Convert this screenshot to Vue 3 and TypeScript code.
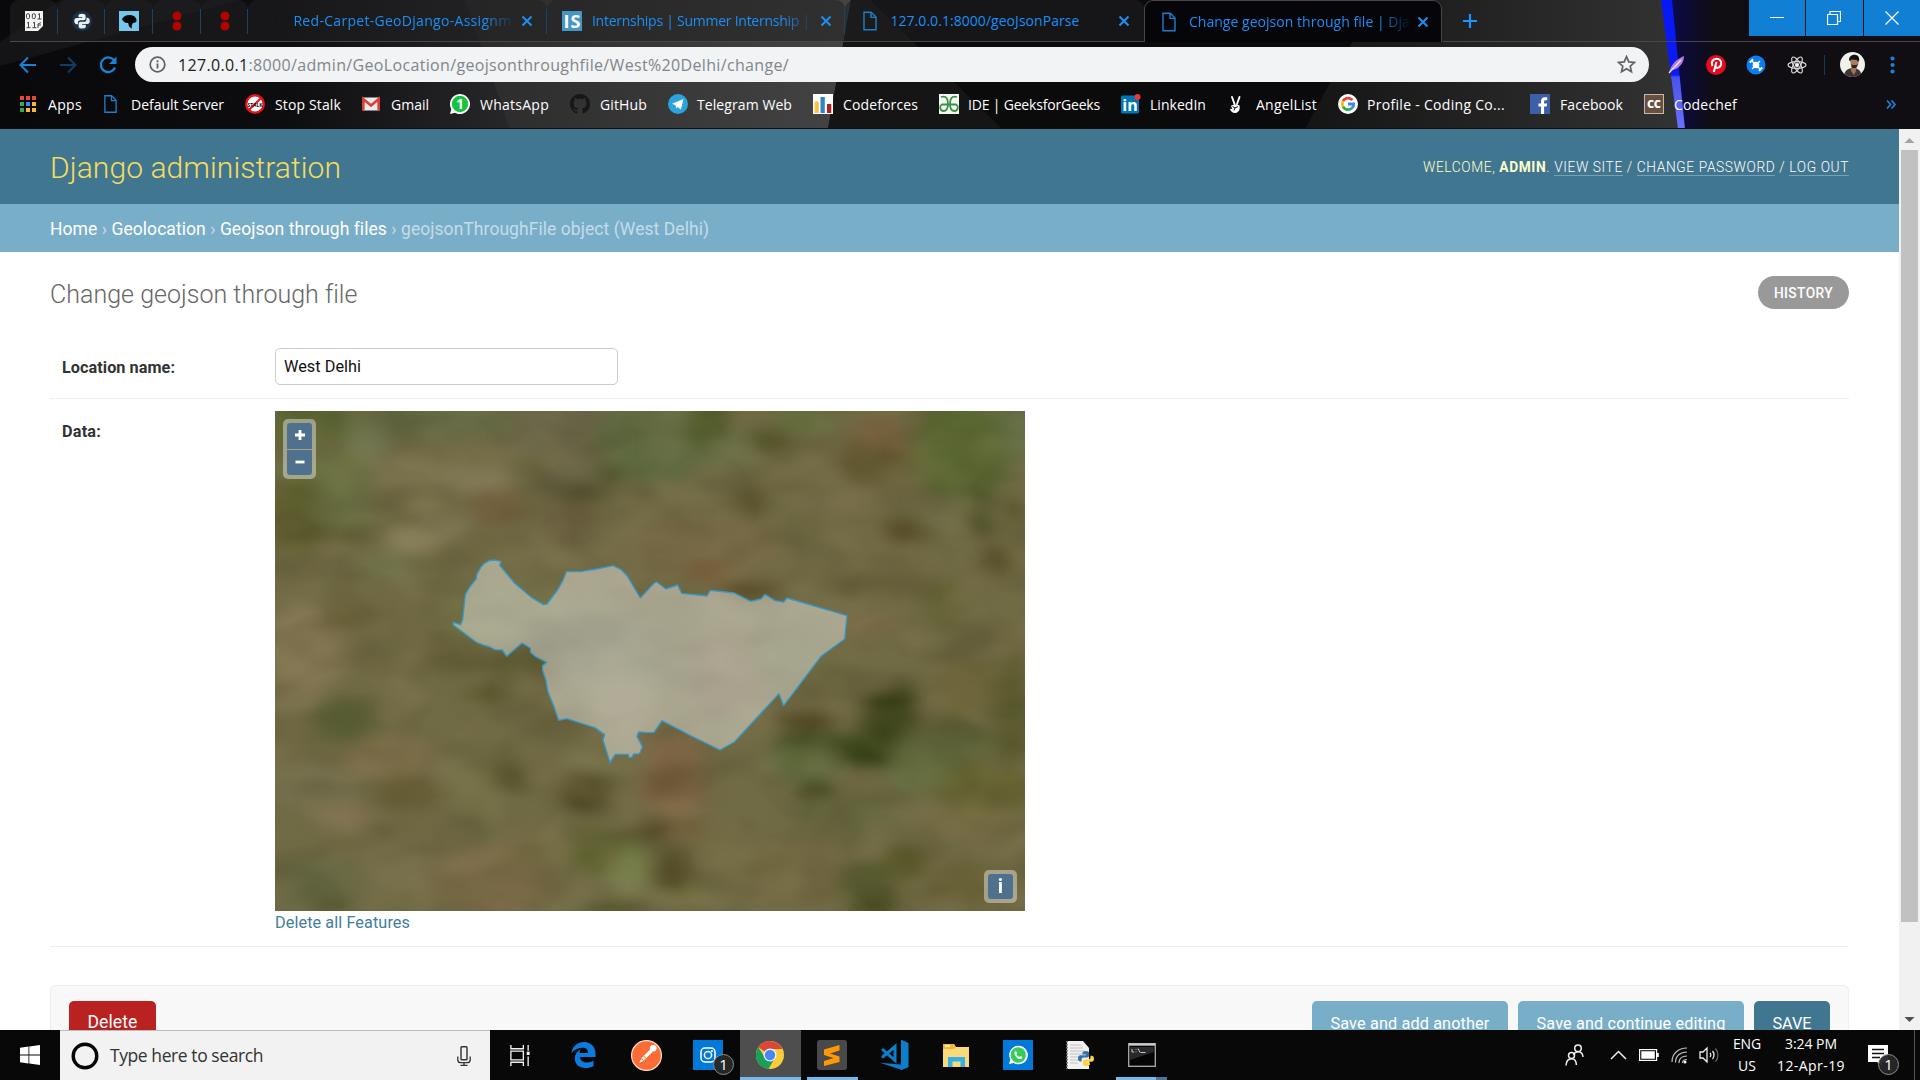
<script setup lang="ts">
interface Tab { icon: string; title: string; width: number; active?: boolean; fade?: boolean }
interface Bookmark { icon: string; label: string; width: number; iconWidth: number; gap: number; after?: number }
interface TaskItem { icon: string; state?: 'active' | 'open' | 'multi'; badge?: string }

/* Tracks a label out (or in) so that it fills the given width. */
const vFit = {
  mounted(el: HTMLElement, binding: { value: number }) {
    const natural = el.getBoundingClientRect().width
    const count = (el.textContent ?? '').trim().length
    el.style.letterSpacing = `${(binding.value - natural) / count}px`
  },
}

const pinned: string[] = ['binary', 'python', 'bird', 'dots', 'dots']

const tabs: Tab[] = [
  { icon: 'ghdark', title: 'Red-Carpet-GeoDjango-Assignm', width: 218, fade: true },
  { icon: 'is', title: 'Internships | Summer Internship |', width: 218, fade: true },
  { icon: 'page', title: '127.0.0.1:8000/geoJsonParse', width: 189 },
  { icon: 'page', title: 'Change geojson through file | Dja', width: 221, active: true, fade: true },
]

const bookmarks: Bookmark[] = [
  { icon: 'apps', label: 'Apps', width: 34, iconWidth: 18, gap: 11 },
  { icon: 'page', label: 'Default Server', width: 93, iconWidth: 15, gap: 13 },
  { icon: 'stop', label: 'Stop Stalk', width: 66, iconWidth: 20, gap: 10 },
  { icon: 'gmail', label: 'Gmail', width: 38, iconWidth: 18, gap: 11 },
  { icon: 'wa', label: 'WhatsApp', width: 69, iconWidth: 20, gap: 10 },
  { icon: 'github', label: 'GitHub', width: 47, iconWidth: 20, gap: 10 },
  { icon: 'telegram', label: 'Telegram Web', width: 95, iconWidth: 20, gap: 9 },
  { icon: 'cf', label: 'Codeforces', width: 75, iconWidth: 20, gap: 10 },
  { icon: 'gfg', label: 'IDE | GeeksforGeeks', width: 132, iconWidth: 20, gap: 9 },
  { icon: 'linkedin', label: 'LinkedIn', width: 56, iconWidth: 20, gap: 9 },
  { icon: 'angel', label: 'AngelList', width: 61, iconWidth: 16, gap: 13 },
  { icon: 'google', label: 'Profile - Coding Co...', width: 138, iconWidth: 20, gap: 9, after: 4 },
  { icon: 'fb', label: 'Facebook', width: 63, iconWidth: 20, gap: 10 },
  { icon: 'cc', label: 'Codechef', width: 63, iconWidth: 20, gap: 10 },
]

const tasks: TaskItem[] = [
  { icon: 'taskview' },
  { icon: 'edge' },
  { icon: 'postman' },
  { icon: 'insta', badge: '1' },
  { icon: 'chrome', state: 'active' },
  { icon: 'sublime', state: 'open' },
  { icon: 'vscode' },
  { icon: 'folder' },
  { icon: 'watile' },
  { icon: 'pyfile' },
  { icon: 'cmd', state: 'multi' },
]

/* Ground cover patches: x, y, rx, ry, colour, opacity */
const patches: [number, number, number, number, string, number][] = [
  [60, 60, 130, 60, '#59662f', 0.8], [330, 60, 150, 50, '#626b45', 0.8], [200, 125, 40, 50, '#76805a', 0.7],
  [110, 230, 90, 70, '#66703f', 0.8], [50, 340, 60, 90, '#5b5b2a', 0.8], [150, 330, 60, 60, '#6b7145', 0.7],
  [120, 392, 100, 14, '#4f4c22', 0.8], [290, 210, 70, 40, '#857d59', 0.6], [430, 225, 60, 40, '#8a8160', 0.7],
  [310, 300, 40, 40, '#847a55', 0.6], [470, 310, 50, 50, '#74613f', 0.9], [290, 410, 45, 35, '#8c8460', 0.8],
  [380, 375, 40, 35, '#847a58', 0.6], [250, 480, 60, 50, '#70744a', 0.7], [545, 95, 50, 60, '#6e6a4e', 0.8],
  [650, 140, 60, 120, '#626044', 0.7], [695, 205, 30, 35, '#4a4a26', 0.8], [640, 272, 40, 14, '#4b4d28', 0.9],
  [590, 240, 30, 40, '#54523a', 0.7], [790, 120, 100, 110, '#5d6a40', 0.85], [905, 70, 30, 80, '#41501c', 0.9],
  [960, 150, 60, 60, '#6c7248', 0.7], [1030, 115, 40, 30, '#545228', 0.9], [1100, 60, 60, 40, '#5f6e3a', 0.7],
  [1260, 120, 60, 60, '#775f3b', 0.8], [1250, 190, 70, 50, '#63572f', 0.8], [1430, 150, 90, 130, '#56662f', 0.85],
  [1540, 90, 40, 80, '#64744a', 0.7], [990, 300, 30, 40, '#524c26', 0.8], [1310, 380, 40, 30, '#51451f', 0.8],
  [1200, 300, 80, 60, '#756b47', 0.6], [1470, 330, 18, 60, '#3d431a', 0.8], [1540, 320, 14, 40, '#48471f', 0.8],
  [1390, 330, 50, 60, '#6f7049', 0.6], [1500, 470, 25, 40, '#4e4320', 0.8], [620, 350, 60, 60, '#655a3c', 0.7],
  [900, 430, 130, 80, '#7d6c48', 0.7], [900, 500, 40, 30, '#735432', 0.7], [990, 550, 60, 20, '#514320', 0.9],
  [760, 460, 80, 50, '#786c4a', 0.6], [560, 420, 30, 40, '#817553', 0.6], [1200, 500, 130, 12, '#837953', 0.6],
  [1300, 540, 150, 12, '#5f5530', 0.6], [1390, 600, 40, 60, '#61602f', 0.6], [1230, 650, 60, 30, '#826f4b', 0.7],
  [70, 720, 80, 110, '#8a7c58', 0.8], [170, 620, 60, 50, '#685f38', 0.7], [380, 730, 60, 60, '#5d5730', 0.7],
  [450, 850, 35, 30, '#545024', 0.8], [60, 880, 60, 60, '#827751', 0.6], [150, 930, 60, 60, '#565d31', 0.85],
  [520, 770, 60, 40, '#56552d', 0.8], [480, 620, 110, 80, '#77784c', 0.8], [660, 690, 120, 60, '#5c5e40', 0.7],
  [700, 780, 100, 60, '#6e6e4c', 0.6], [730, 900, 60, 90, '#847c58', 0.7], [1050, 760, 100, 70, '#6a6942', 0.7],
  [940, 800, 60, 100, '#756245', 0.7], [850, 770, 40, 20, '#7d7a59', 0.7],
  [1110, 930, 60, 18, '#4c401c', 0.8], [1270, 930, 50, 70, '#313a11', 0.95], [1230, 1020, 70, 40, '#303d12', 0.9],
  [1310, 870, 18, 60, '#323c14', 0.8], [1130, 1000, 80, 40, '#465024', 0.9], [1130, 1135, 36, 36, '#3d4119', 0.9],
  [1100, 1060, 70, 50, '#5d6a3c', 0.8], [1390, 1010, 90, 80, '#596035', 0.8], [1530, 900, 40, 140, '#525427', 0.8],
  [1440, 840, 70, 60, '#6c6236', 0.7], [1470, 1130, 90, 60, '#61602c', 0.8], [1450, 1230, 80, 40, '#786b42', 0.7],
  [1340, 1090, 60, 60, '#63723f', 0.6], [1190, 1200, 100, 50, '#666b41', 0.6], [240, 1040, 80, 60, '#7d6d48', 0.8],
  [90, 1130, 90, 60, '#757150', 0.7], [160, 1210, 50, 40, '#89775a', 0.8], [290, 1140, 60, 40, '#645a32', 0.8],
  [420, 1120, 50, 90, '#76744a', 0.6], [495, 1080, 30, 50, '#56522a', 0.7], [650, 1130, 50, 50, '#534c25', 0.8],
  [650, 1180, 50, 14, '#423c1a', 0.7], [830, 1030, 60, 60, '#86694a', 0.8], [830, 1130, 60, 60, '#7a5d3f', 0.8],
  [840, 1180, 40, 12, '#987858', 0.7], [840, 1240, 50, 40, '#79643f', 0.8], [680, 1050, 80, 30, '#7f7b53', 0.7],
  [790, 1240, 16, 40, '#4b411f', 0.9], [730, 1265, 40, 12, '#4d4d24', 0.7], [740, 1360, 40, 70, '#77814c', 0.9],
  [660, 1310, 50, 60, '#5e622f', 0.8], [830, 1370, 32, 60, '#4c4520', 0.85], [700, 1475, 60, 14, '#454d1d', 0.9],
  [860, 1440, 50, 16, '#7a7a49', 0.8], [950, 1330, 70, 60, '#716b41', 0.6], [1090, 1380, 90, 90, '#766b44', 0.7],
  [1240, 1400, 60, 60, '#50562a', 0.8], [1240, 1475, 50, 20, '#424315', 0.9], [1305, 1350, 35, 45, '#53521f', 0.8],
  [1440, 1400, 70, 60, '#665e33', 0.8], [100, 1400, 110, 70, '#626440', 0.8], [300, 1340, 110, 80, '#7b714e', 0.8],
  [460, 1400, 100, 90, '#7e6b48', 0.8], [130, 1475, 30, 10, '#474723', 0.8], [560, 1300, 60, 60, '#776d45', 0.6],
]

const outline =
  '70,247 92,254 98,238 106,164 118,143 139,116 140,104 152,83 162,71 178,62 194,60 213,64 209,76 254,130 304,172 340,194 351,192 382,151 399,121 409,95 450,95 500,87 549,77 572,88 591,107 631,174 669,133 679,125 708,147 743,135 755,160 831,168 841,151 913,159 962,184 993,177 1005,163 1035,182 1061,186 1071,174 1251,227 1244,297 1173,349 1061,497 1047,461 913,606 870,630 786,589 696,542 672,577 650,578 626,576 621,589 637,620 630,638 625,642 611,642 606,652 597,652 595,643 556,643 540,667 519,600 524,584 495,563 410,536 386,541 372,500 354,455 347,418 338,391 338,377 350,367 315,349 302,337 301,324 276,309 230,349 217,330 195,329 180,321 160,315 138,306 70,255'

const saves: { label: string; width: number; primary?: boolean }[] = [
  { label: 'Save and add another', width: 159 },
  { label: 'Save and continue editing', width: 189 },
  { label: 'SAVE', width: 39, primary: true },
]
</script>

<template>
  <div class="screen">
    <svg class="defs" width="0" height="0">
      <defs>
        <symbol id="page" viewBox="0 0 16 20"><path d="M2 1.2h7.2L14 6v12.8H2zM9 1.2V6.400h5" fill="none" stroke="#1d7fc9" stroke-width="1.4" /></symbol>
        <symbol id="binary" viewBox="0 0 20 20"><path d="M1 0h18v15l-5 5H1z" fill="#f4f4f4" /><g fill="none" stroke="#444" stroke-width="1"><rect x="2.500" y="2.700" width="3" height="5" rx="1.300" /><rect x="8.300" y="2.700" width="3" height="5" rx="1.300" /><path d="M14 3.500l1.500-.8v5.300M13.500 8h4M3 12l1.500-.8v5.500M2.500 16.700h4M9 12l1.500-.8v5.500M8.300 16.700h4M14 17v-4l3-1.500M14 14h3" /></g></symbol>
        <symbol id="python" viewBox="0 0 20 20"><circle cx="10" cy="10" r="10" fill="#1d3247" /><path d="M9.900 2.700c-3 0-3.400 1-3.400 2v1.600h3.700v.8H4.800c-1.500 0-2.500 1.200-2.500 3s1 3.200 2.400 3.200h1.200v-1.700c0-1.400 1-2.300 2.400-2.300h3.300c1.200 0 2-.9 2-2V4.800c0-1.400-1.400-2.100-3.700-2.100z" fill="#f3f6f8" /><path d="M10.300 17.500c3 0 3.500-1 3.500-2v-1.700h-3.700V13h5.300c1.500 0 2.400-1.200 2.400-3s-1-3.200-2.400-3.200h-1v1.700c0 1.400-1 2.300-2.500 2.300H8.600c-1.200 0-2 .9-2 2v2.600c0 1.400 1.400 2.100 3.700 2.100z" fill="#e6ecf0" /></symbol>
        <symbol id="bird" viewBox="0 0 20 20"><rect width="20" height="20" fill="#76c5ea" /><path d="M3 8c2-3 5-4.500 8.500-4 4 .5 6 3 6 5.500 0 2.200-2 2.500-3.500 2.300-1 2-1.800 3.500-1 5.700-3-.8-3.500-3.500-3.800-5.500C7 12.500 4 11 3 8z" fill="#050505" /></symbol>
        <symbol id="dots" viewBox="0 0 20 20"><circle cx="10" cy="5" r="4.500" fill="#b00404" /><circle cx="10" cy="15" r="4.500" fill="#b00404" /></symbol>
        <symbol id="ghdark" viewBox="0 0 20 20"><circle cx="10" cy="10" r="7" fill="none" stroke="#191919" stroke-width="2" /></symbol>
        <symbol id="is" viewBox="0 0 20 20"><rect width="20" height="20" fill="#4796c8" /><text x="10" y="17" text-anchor="middle" font-family="Open Sans, sans-serif" font-weight="700" font-size="18" textLength="17" fill="#fff">IS</text></symbol>
        <symbol id="apps" viewBox="0 0 18 18"><path d="M1 1h4v4H1zM7 1h4v4H7zM13 1h4v4h-4z" fill="#e8453c" /><path d="M1 7h4v4H1zM1 13h4v4H1z" fill="#36a852" /><path d="M7 7h4v4H7z" fill="#4285f4" /><path d="M13 7h4v4h-4zM7 13h4v4H7zM13 13h4v4h-4z" fill="#f9bb2d" /></symbol>
        <symbol id="stop" viewBox="0 0 20 20"><circle cx="10" cy="10" r="10" fill="#e5131a" /><circle cx="10" cy="10" r="7.600" fill="#fff" /><path d="M15.800 4.200L4.200 15.800" stroke="#e5131a" stroke-width="2" /><text x="10" y="12.500" text-anchor="middle" font-size="6" font-weight="700" font-family="Open Sans, sans-serif" textLength="15" lengthAdjust="spacingAndGlyphs" fill="#111">STALK</text></symbol>
        <symbol id="gmail" viewBox="0 0 18 18"><rect y="2.500" width="18" height="13" rx="1" fill="#ececec" /><path d="M1.300 15.500V4l7.700 6.500L16.700 4v11.500" fill="none" stroke="#d93f35" stroke-width="2.600" /></symbol>
        <symbol id="wa" viewBox="0 0 20 20"><path d="M0 20l1.300-5A10 10 0 1 1 5 18.700z" fill="#fff" /><circle cx="10" cy="10" r="8.200" fill="#16c240" /><text x="10" y="15" text-anchor="middle" font-size="14" font-weight="700" font-family="Open Sans, sans-serif" fill="#fff">1</text></symbol>
        <symbol id="github" viewBox="0 0 16 16"><path fill="#181616" d="M8 0C3.580 0 0 3.580 0 8c0 3.540 2.290 6.530 5.470 7.590.4.070.55-.17.55-.38v-1.490c-2.010.37-2.530-.49-2.690-.94-.09-.23-.48-.94-.82-1.130-.28-.15-.68-.52-.01-.53.63-.01 1.080.58 1.230.82.72 1.210 1.870.87 2.330.66.07-.52.28-.87.510-1.070-1.780-.2-3.640-.89-3.640-3.950 0-.87.310-1.590.82-2.150-.08-.2-.36-1.020.08-2.120 0 0 .67-.21 2.200.82a7.600 7.600 0 0 1 4 0c1.530-1.040 2.200-.82 2.200-.82.44 1.100.16 1.920.08 2.120.510.56.82 1.270.82 2.150 0 3.070-1.870 3.750-3.650 3.950.29.25.54.73.54 1.480v2.200c0 .21.150.46.55.38A8 8 0 0 0 8 0z" /></symbol>
        <symbol id="telegram" viewBox="0 0 20 20"><circle cx="10" cy="10" r="10" fill="#2ba3de" /><path d="M4 9.800L15.500 5l-2.600 10.500-3.300-2.600-1.500 1.600-.5-3.200z" fill="#fff" /></symbol>
        <symbol id="cf" viewBox="0 0 20 20"><rect width="20" height="20" fill="#fff" /><path d="M1.500 7.500h4.300V19H1.500z" fill="#f3c643" /><path d="M7.500 3h4.300v16H7.500z" fill="#2c86c9" /><path d="M14 10h4.300v9H14z" fill="#b01f24" /></symbol>
        <symbol id="gfg" viewBox="0 0 20 20"><rect width="20" height="20" fill="#f4f8f3" /><g fill="none" stroke="#3c8f47" stroke-width="1.800"><path d="M2 3c6-2 7 3 7 7s-1 7-4.500 7S0 12 3 10.500h14C20 12 19 17 15.500 17S11 14 11 10s1-9 7-7" /></g></symbol>
        <symbol id="linkedin" viewBox="0 0 20 20"><rect y="1.500" width="18" height="18" rx="1.500" fill="#0077b5" /><text x="9" y="16.500" text-anchor="middle" font-size="16" font-weight="700" font-family="Open Sans, sans-serif" fill="#fff">in</text><circle cx="16.500" cy="3" r="3" fill="#f2362f" /></symbol>
        <symbol id="angel" viewBox="0 0 16 20"><path d="M5 3l2.500 7M12.500 3L10 10" stroke="#fff" stroke-width="1.900" stroke-linecap="round" /><path d="M4 12c2-2 6-2 8.500-.5.8 3.500-.5 7-4 7.500-3 .2-5-2-5.500-4 2-.5 2.500.5 3 1.500" fill="#fff" /><path d="M5.500 12.500l2.500 1.500 3-1.500M8 14l-1 2.500" stroke="#111" fill="none" /></symbol>
        <symbol id="google" viewBox="0 0 20 20"><circle cx="10" cy="10" r="10" fill="#fff" /><g fill="none" stroke-width="2.800"><path d="M14.500 6.200A5.800 5.800 0 0 0 5 7.200" stroke="#ea4335" /><path d="M5 7.200a6 6 0 0 0 0 5.600" stroke="#fbbc05" /><path d="M5 12.800a5.800 5.800 0 0 0 8.800 1.500" stroke="#34a853" /><path d="M13.800 14.300A5.600 5.600 0 0 0 15.700 10H10" stroke="#4285f4" /></g></symbol>
        <symbol id="fb" viewBox="0 0 20 20"><rect width="20" height="20" fill="#3d5fa8" /><path d="M11 20v-7.500H8.500v-3H11V7.300c0-2.600 1.500-4 3.900-4h2.300v2.900h-1.600c-1.200 0-1.500.6-1.500 1.500v1.800h3l-.4 3h-2.600V20z" fill="#fff" /></symbol>
        <symbol id="cc" viewBox="0 0 20 20"><rect x=".5" y=".5" width="19" height="19" fill="#66503f" stroke="#c9b8a8" /><text x="10" y="14.200" text-anchor="middle" font-size="11" font-weight="800" font-family="Open Sans, sans-serif" textLength="14" fill="#fff">CC</text></symbol>

        <symbol id="taskview" viewBox="0 0 22 24"><g fill="none" stroke="#f2f2f2" stroke-width="1.400"><path d="M1.500 1v4h13V1M1.500 23v-4h13v4M1.500 7.500h13v9h-13zM19.500 1v6M19.500 13v10" /></g><path d="M18 8h3v3.500h-3z" fill="#fff" /></symbol>
        <symbol id="edge" viewBox="0 0 24 26"><path d="M0 11C1 4 6 0 12.500 0 19.500 0 24 5 24 11.500V15H8.500c.3 4 3.500 5.500 7 5.500 2.500 0 4.700-.6 6.500-1.700v5.100C20 25.300 17 26 14 26 7.500 26 3.300 22.300 3.300 16.500c0-4 2.200-7.200 6-9.200C8.500 8.300 8.200 9.500 8 11h8.500c0-3.500-1.800-5.300-5.300-5.300C7 5.700 3 7.500 0 11z" fill="#0b7bdd" /></symbol>
        <symbol id="postman" viewBox="0 0 32 32"><circle cx="16" cy="16" r="15.400" fill="#fb6c37" stroke="#fbd9c9" stroke-width="1.300" /><path d="M11 18.500L20 9.500l2.500 2.500-9 9-5.500 3.500z" fill="#fff" /><circle cx="23" cy="8.500" r="3.400" fill="#fff" /><path d="M10 19l3 2M13 16.500l2.500 2.500M8 24h4" stroke="#ef5a2c" /></symbol>
        <symbol id="insta" viewBox="0 0 30 30"><rect width="30" height="30" fill="#0079d9" /><rect x="8" y="8" width="14" height="14" rx="4" fill="none" stroke="#fff" stroke-width="1.500" /><circle cx="15" cy="15" r="3.600" fill="none" stroke="#fff" stroke-width="1.500" /><circle cx="19" cy="11" r="1" fill="#fff" /></symbol>
        <symbol id="chrome" viewBox="0 0 28 28"><circle cx="14" cy="14" r="14" fill="#fbcb3d" /><path d="M14 14L2.300 6.300A14 14 0 0 1 26.500 8H14z" fill="#dc4638" /><path d="M2.300 6.300A14 14 0 0 0 12.500 28l5.500-9.500L8 15z" fill="#199f59" /><circle cx="14" cy="14" r="6.500" fill="#f2f2f2" /><circle cx="14" cy="14" r="5.200" fill="#4687f4" /></symbol>
        <symbol id="sublime" viewBox="0 0 30 30"><rect width="30" height="30" rx="2.500" fill="#494949" /><path d="M7 9.500L22.500 5v5.500L13 13.500l9.500 3V22L7 26v-5l9.500-3L7 15z" fill="#ff9806" /></symbol>
        <symbol id="vscode" viewBox="0 0 30 30"><path d="M23 0l6.500 3v24L23 30 1 22.800l21 1.600V0z" fill="#0a7fcb" /><path d="M3 9l13 11.500V6.500L3 17.500" fill="none" stroke="#0a7fcb" stroke-width="3" /></symbol>
        <symbol id="folder" viewBox="0 0 28 26"><path d="M1 2h11l2 3h13v20H1z" fill="#fad978" /><path d="M1 2h11l2 3-2 2H1z" fill="#f3b92c" /><path d="M3 3.200h5v1.500H3z" fill="#fff" /><path d="M6 25V15h17v10h-4.500v-5.500h-8V25z" fill="#36b0e6" /></symbol>
        <symbol id="watile" viewBox="0 0 30 30"><rect width="30" height="30" fill="#0079d9" /><path d="M6 24l1.300-4.600A9.300 9.300 0 1 1 10.700 23z" fill="#fff" /><circle cx="15.200" cy="15" r="7.700" fill="#37cc5a" /><path d="M11.500 12c.5-1 1.600-1 2 0l.6 1.300-.7 1c.7 1.400 1.500 2.100 2.900 2.700l1-.9 1.700.9c.6.400 0 1.700-.9 2-2.900.8-7.200-3.300-6.600-7z" fill="#fff" /></symbol>
        <symbol id="pyfile" viewBox="0 0 28 28"><path d="M1 0h16l6 7v21H1z" fill="#f1f1f1" /><path d="M4 4h11M4 7h13M4 10h15M4 13h13M4 16h10M4 19h9M4 22h8" stroke="#b7b7b7" stroke-width=".8" /><path d="M1 0v28" stroke="#777" stroke-width="2" stroke-dasharray="1.500 1.500" /><path d="M20 10c-3 0-3.500 1-3.500 2v1.500H20v.8h-5.500C13 14.300 12 15.500 12 17.500s1 3 2.300 3h1.300v-1.700c0-1.300 1-2.200 2.300-2.200h3.300c1 0 1.900-.9 1.900-2V12c0-1.300-1.200-2-3.100-2z" fill="#3672a4" /><path d="M20.500 25c3 0 3.400-1 3.400-2v-1.500h-3.400v-.8h5c1.500 0 2.500-1.200 2.500-3s-1-3-2.300-3h-1.200v1.500c0 1.300-1 2.200-2.300 2.200h-3.400c-1 0-1.900.9-1.900 2v2.500c0 1.400 1.400 2.100 3.600 2.100z" fill="#ffd344" /></symbol>
        <symbol id="cmd" viewBox="0 0 28 24"><rect x=".7" y=".7" width="26.600" height="22.600" fill="#050505" stroke="#a9adb3" stroke-width="1.300" /><path d="M1 1.500h26" stroke="#c6c9ce" stroke-width="2.400" /><path d="M2 4h24v5L2 17z" fill="#292929" /><path d="M4 6v3h2M8 6v.8M8 8.500v.8M10 5.500l2 4M12.500 9.500h5" stroke="#ddd" stroke-width=".9" fill="none" /></symbol>
      </defs>
    </svg>

    <header class="browser">
      <svg class="wallpaper" viewBox="0 0 1920 129" preserveAspectRatio="none">
        <defs>
          <linearGradient id="wLeft"><stop offset="0" stop-color="#09090b" /><stop offset=".55" stop-color="#0d0d0f" /><stop offset="1" stop-color="#27272a" /></linearGradient>
          <linearGradient id="wMid"><stop offset="0" stop-color="#2b2b2c" /><stop offset="1" stop-color="#444" /></linearGradient>
          <linearGradient id="wRight"><stop offset="0" stop-color="#151516" /><stop offset="1" stop-color="#333334" /></linearGradient>
          <linearGradient id="glow"><stop offset="0" stop-color="#0a0a66" /><stop offset=".35" stop-color="#0c0a38" /><stop offset="1" stop-color="#100e12" /></linearGradient>
          <linearGradient id="beam" x2="0" y2="1"><stop offset="0" stop-color="#0618f5" /><stop offset=".58" stop-color="#0b1cf2" /><stop offset=".6" stop-color="#4a52ee" /><stop offset="1" stop-color="#6a70ff" /></linearGradient>
        </defs>
        <rect width="1920" height="129" fill="#0a090c" />
        <path d="M0 0h480l30 129H0z" fill="url(#wLeft)" />
        <path d="M0 42v24L240 0H60z" fill="#1a1a1c" opacity=".7" />
        <path d="M465 0h386l-23 129H510z" fill="url(#wMid)" />
        <path d="M851 0h30l121 129H828z" fill="#151515" />
        <path d="M870 0h290v129h-158z" fill="#0b0b0c" />
        <path d="M1375 0h288l22 129h-380z" fill="url(#wRight)" />
        <path d="M1662 0h70v129h-50z" fill="#100e12" />
        <path d="M1664 0h52l-8 129h-26z" fill="url(#glow)" />
        <path d="M1732 0h188v129h-188z" fill="#100e12" />
        <path d="M1661 0h11l13 129h-7z" fill="url(#beam)" />
        <path d="M0 128.500h1920" stroke="#101012" />
      </svg>

      <div class="strip">
        <div v-for="(name, i) in pinned" :key="i" class="pin"><svg width="20" height="20"><use :href="'#' + name" /></svg></div>
        <div v-for="tab in tabs" :key="tab.title" class="tab" :class="{ active: tab.active }">
          <svg class="favicon" width="20" height="20"><use :href="'#' + tab.icon" /></svg>
          <span class="tab-label" :class="{ fade: tab.fade }"><span v-fit="tab.width" class="t">{{ tab.title }}</span></span>
          <svg class="x" width="12" height="12" viewBox="0 0 12 12"><path d="M1.500 1.500l9 9M10.500 1.500l-9 9" stroke="#1b8ff0" stroke-width="2" /></svg>
        </div>
        <svg class="plus" width="16" height="16" viewBox="0 0 16 16"><path d="M8 1v14M1 8h14" stroke="#1b95ff" stroke-width="2.200" /></svg>
        <div class="window">
          <span><svg width="14" height="14" viewBox="0 0 14 14"><path d="M0 6.500h14" stroke="#fff" /></svg></span>
          <span><svg width="14" height="14" viewBox="0 0 14 14"><path d="M.5 3.500h10v10H.5zM3 3.500V.5h10.500v10H10.500" fill="none" stroke="#fff" stroke-width="1.200" /></svg></span>
          <span><svg width="14" height="14" viewBox="0 0 14 14"><path d="M.5 .5l13 13M13.500 .5l-13 13" stroke="#fff" stroke-width="1.200" /></svg></span>
        </div>
      </div>

      <div class="toolbar">
        <svg class="nav" width="18" height="18" viewBox="0 0 18 18"><path d="M17 9H2M9 1.500L1.500 9 9 16.500" fill="none" stroke="#1a83d6" stroke-width="2" /></svg>
        <svg class="nav" width="18" height="18" viewBox="0 0 18 18"><path d="M1 9h15M9 1.500L16.500 9 9 16.500" fill="none" stroke="#123d61" stroke-width="2" /></svg>
        <svg class="nav" width="20" height="20" viewBox="0 0 20 20"><path d="M16.500 6A7.300 7.300 0 1 0 17 12.500" fill="none" stroke="#1a83d6" stroke-width="2.200" /><path d="M18.500 1.500V9H11z" fill="#1a83d6" /></svg>
        <div class="omnibox">
          <svg width="17" height="17" viewBox="0 0 17 17"><circle cx="8.500" cy="8.500" r="7.300" fill="none" stroke="#5f6368" stroke-width="1.700" /><path d="M8.500 7.500v5M8.500 4.300v1.900" stroke="#5f6368" stroke-width="1.800" /></svg>
          <span v-fit="611" class="url"><b>127.0.0.1</b>:8000/admin/GeoLocation/geojsonthroughfile/West%20Delhi/change/</span>
          <svg class="star" width="19" height="19" viewBox="0 0 20 20"><path d="M10 1.800l2.400 5.500 6 .5-4.500 4 1.300 5.900-5.200-3.100-5.200 3.100 1.300-5.900-4.500-4 6-.5z" fill="none" stroke="#5f6368" stroke-width="1.800" /></svg>
        </div>
        <div class="exts">
          <svg width="18" height="20" viewBox="0 0 18 20"><path d="M1 18C3 9 9 4 16 1c0 7-5 13-12 14z" fill="#b57fd6" /><path d="M1 18L13 5" stroke="#f0dcf8" stroke-width="1.200" /></svg>
          <svg width="20" height="20" viewBox="0 0 20 20"><circle cx="10" cy="10" r="10" fill="#e30b1c" /><path d="M6.500 11C4.500 7 7 3.800 10.500 3.800c3 0 5 2 4.700 5-.4 4-4.500 5-5.700 3M10.400 7l-2.600 10" fill="none" stroke="#fff" stroke-width="2" /></svg>
          <svg width="20" height="20" viewBox="0 0 20 20"><circle cx="10" cy="10" r="9.500" fill="#0b7df0" /><circle cx="10" cy="10" r="3.300" fill="#fff" /><path d="M6 6l8 8M14 6l-8 8" stroke="#fff" stroke-width="1.400" /><path d="M3.800 7.500l3.200-3.200M13 15.700l3.200-3.200" stroke="#fff" stroke-width="2" /></svg>
          <svg width="20" height="20" viewBox="0 0 20 20" fill="none" stroke="#d7d7d7" stroke-width="1.200"><ellipse cx="10" cy="10" rx="9" ry="3.400" /><ellipse cx="10" cy="10" rx="9" ry="3.400" transform="rotate(60 10 10)" /><ellipse cx="10" cy="10" rx="9" ry="3.400" transform="rotate(120 10 10)" /><circle cx="10" cy="10" r="1.600" fill="#fff" /></svg>
        </div>
        <i class="rule"></i>
        <svg class="avatar" width="25" height="25" viewBox="0 0 25 25"><clipPath id="round"><circle cx="12.500" cy="12.500" r="12.500" /></clipPath><g clip-path="url(#round)"><rect width="25" height="25" fill="#eff1ea" /><path d="M4 25c0-6 3-8.500 9-9 6 .5 8.500 3 8.500 9z" fill="#3c3639" /><path d="M11 14h6l-1 5-2 4-3-4z" fill="#a17355" /><ellipse cx="14.500" cy="10.500" rx="4" ry="5.500" fill="#a97c60" /><path d="M9 8c0-6 9-7 10-2 .5 2 0 3-1 4l-1-2-6-.5-.5 2z" fill="#15110f" /><path d="M11 12l1.500 4h3.500l2-4-1.500 1h-4z" fill="#2b211d" /></g></svg>
        <svg class="menu" width="5" height="18" viewBox="0 0 5 18" fill="#1a83d6"><circle cx="2.500" cy="2.500" r="2.100" /><circle cx="2.500" cy="9" r="2.100" /><circle cx="2.500" cy="15.500" r="2.100" /></svg>
      </div>

      <nav class="bookmarks">
        <a v-for="b in bookmarks" :key="b.label" :style="{ columnGap: b.gap + 'px', marginRight: (b.after ?? 0) + 'px' }">
          <svg :width="b.iconWidth" height="20"><use :href="'#' + b.icon" /></svg>
          <span v-fit="b.width" class="t">{{ b.label }}</span>
        </a>
        <svg class="more" width="10" height="9" viewBox="0 0 10 9"><path d="M1 .5l3.500 4L1 8.500M5.500 .5l3.500 4-3.500 4" fill="none" stroke="#1a83d6" stroke-width="1.700" /></svg>
      </nav>
    </header>

    <div class="viewport">
      <main>
        <div class="brand">
          <h1 v-fit="291" class="t">Django administration</h1>
          <div v-fit="426" class="tools t">Welcome, <strong>admin</strong>. <a>View site</a> / <a>Change password</a> / <a>Log out</a></div>
        </div>
        <div class="crumbs"><span v-fit="658.5" class="t"><a>Home</a> › <a>Geolocation</a> › <a>Geojson through files</a> › geojsonThroughFile object (West Delhi)</span></div>
        <section class="content">
          <div class="title"><h2 v-fit="307" class="t">Change geojson through file</h2><a class="history">History</a></div>
          <div class="row first"><label><span v-fit="113" class="t">Location name:</span></label><div class="field"><span v-fit="77" class="t">West Delhi</span></div></div>
          <div class="row second">
            <label><span v-fit="39" class="t">Data:</span></label>
            <div class="geo">
              <div class="map">
                <svg class="ground" width="750" height="500" viewBox="10 32 1548 1452" preserveAspectRatio="none">
                  <defs>
                    <filter id="soft" x="-10%" y="-10%" width="120%" height="120%" color-interpolation-filters="sRGB"><feGaussianBlur stdDeviation="22 20" /></filter>
                    <filter id="dark" x="0" y="0" width="100%" height="100%" color-interpolation-filters="sRGB"><feTurbulence type="fractalNoise" baseFrequency=".0065 .009" numOctaves="2" seed="8" /><feColorMatrix values="0 0 0 0 .23  0 0 0 0 .21  0 0 0 0 .08  2.600 0 0 0 -1.100" /></filter>
                    <filter id="light" x="0" y="0" width="100%" height="100%" color-interpolation-filters="sRGB"><feTurbulence type="fractalNoise" baseFrequency=".009 .008" numOctaves="2" seed="23" /><feColorMatrix values="0 0 0 0 .58  0 0 0 0 .54  0 0 0 0 .38  0 2.600 0 0 -1.100" /></filter>
                  </defs>
                  <rect x="10" y="32" width="1548" height="1452" fill="#706a45" />
                  <g filter="url(#soft)"><ellipse v-for="(p, i) in patches" :key="i" :cx="p[0]" :cy="p[1]" :rx="p[2] * 1.15" :ry="p[3] * 1.15" :fill="p[4]" :opacity="p[5]" /></g>
                  <rect x="10" y="32" width="1548" height="1452" filter="url(#dark)" opacity=".2" />
                  <rect x="10" y="32" width="1548" height="1452" filter="url(#light)" opacity=".22" />
                </svg>
                <svg class="shape" width="750" height="500" viewBox="0 0 750 500"><g transform="translate(155 129) scale(.33333)"><polygon :points="outline" fill="#fff" fill-opacity=".4" stroke="#3399cc" stroke-width="4" stroke-linejoin="round" /></g></svg>
                <div class="ctl zoom"><button><svg width="12" height="12" viewBox="0 0 12 12"><path d="M6 1v10M1 6h10" stroke="#fff" stroke-width="2.800" /></svg></button><button><svg width="12" height="12" viewBox="0 0 12 12"><path d="M1.500 6h9" stroke="#fff" stroke-width="2.800" /></svg></button></div>
                <div class="ctl info"><button>i</button></div>
              </div>
              <a v-fit="135" class="clear t">Delete all Features</a>
            </div>
          </div>
          <div class="submit">
            <a class="btn delete"><span v-fit="50" class="t">Delete</span></a>
            <a v-for="s in saves" :key="s.label" class="btn" :class="{ primary: s.primary }"><span v-fit="s.width" class="t">{{ s.label }}</span></a>
          </div>
        </section>
      </main>
      <aside class="scroll">
        <svg width="21" height="21" viewBox="0 0 21 21"><path d="M5.500 14h10L10.500 9z" fill="#a3a3a3" /></svg>
        <i></i>
        <svg class="down" width="21" height="21" viewBox="0 0 21 21"><path d="M5.500 8h10l-5 5z" fill="#505050" /></svg>
      </aside>
    </div>

    <footer class="taskbar">
      <div class="start"><svg width="20" height="20" viewBox="0 0 20 20"><path d="M0 2.800l8.500-1.200v8H0zM9.300 1.500L20 0v9.600H9.300zM0 10.400h8.500v8L0 17.200zM9.300 10.400H20V20L9.300 18.500z" fill="#fff" /></svg></div>
      <div class="search">
        <svg width="28" height="28" viewBox="0 0 28 28"><circle cx="14" cy="14" r="11.800" fill="none" stroke="#050505" stroke-width="3.400" /></svg>
        <span v-fit="153" class="t">Type here to search</span>
        <svg class="mic" width="14" height="20" viewBox="0 0 14 20"><rect x="4" y=".8" width="6" height="13" rx=".8" fill="none" stroke="#333" stroke-width="1.400" /><path d="M.8 10.500v3.200c0 2 1.200 3 3 3h6.400c1.800 0 3-1 3-3v-3.200M7 17v2.500M3.500 19.300h7" fill="none" stroke="#333" stroke-width="1.300" /></svg>
      </div>
      <div class="tasks">
        <div v-for="task in tasks" :key="task.icon" class="task" :class="task.state">
          <svg :class="'i-' + task.icon"><use :href="'#' + task.icon" /></svg>
          <span v-if="task.badge" class="badge">{{ task.badge }}</span>
        </div>
      </div>
      <div class="tray">
        <svg width="19" height="22" viewBox="0 0 19 22" fill="none" stroke="#eee" stroke-width="1.500"><circle cx="13" cy="4.200" r="3.300" /><circle cx="6.500" cy="11.500" r="3" /><path d="M8.500 11c.8-2.200 2.300-3.300 4.500-3.300 2.900 0 4.800 2 5 5.300M1 21.500c.3-4.500 2.500-6.700 5.500-6.700s4.700 2.200 4.900 6.200" /></svg>
        <svg width="17" height="10" viewBox="0 0 17 10"><path d="M1 9l7.500-7.500L16 9" fill="none" stroke="#eee" stroke-width="1.500" /></svg>
        <svg width="20" height="12" viewBox="0 0 20 12"><rect x=".6" y=".6" width="17" height="10.800" fill="none" stroke="#fff" stroke-width="1.200" /><path d="M2.300 2.300h13.500v7.400H2.300zM18 4h1.800v4H18z" fill="#fff" /></svg>
        <svg width="17" height="17" viewBox="0 0 17 17" fill="none" stroke="#bbb" stroke-width="1.200"><path d="M1 15C1 7 7 1 16 1M4.500 15.500C4.500 9 9 5 16 5M8 16c0-4.500 3-7 8-7M11.500 16c0-2 1.500-3.500 4.500-3.500" /><circle cx="14" cy="15" r="1.500" fill="#fff" stroke="none" /></svg>
        <svg width="21" height="18" viewBox="0 0 21 18" fill="none" stroke="#eee" stroke-width="1.300"><path d="M1 6h3l4-4v14l-4-4H1zM11 7c1 1 1 3 0 4M13.500 5c2 2.300 2 6 0 8" /><path d="M16.500 2.500c3.200 3.600 3.200 9.500 0 13" stroke="#666" /></svg>
        <div class="stack lang"><span v-fit="28" class="t">ENG</span><span v-fit="18" class="t">US</span></div>
        <div class="stack clock"><span v-fit="52" class="t">3:24 PM</span><span v-fit="68" class="t">12-Apr-19</span></div>
        <div class="note"><svg width="20" height="21" viewBox="0 0 20 21"><path d="M0 0h20v17h-6v4l-5-4H0z" fill="#fff" /><path d="M4 4.500h12M4 8.500h12M4 12.500h8" stroke="#111" stroke-width="1.300" /></svg><span class="badge">1</span></div>
        <i class="peek"></i>
      </div>
    </footer>
  </div>
</template>

<style>
html, body { margin: 0; overflow: hidden; background: #fff; }
</style>

<style scoped>
* { box-sizing: border-box; }
svg { display: block; flex: none; }
.defs { position: absolute; }
.t { display: block; flex: none; white-space: nowrap; width: max-content; }
.screen { width: 1920px; height: 1080px; display: flex; flex-direction: column; overflow: hidden; font-family: "Open Sans", "Noto Sans", sans-serif; }

.browser { position: relative; height: 129px; flex: none; display: flex; flex-direction: column; background: #0a090c; }
.wallpaper { position: absolute; inset: 0; width: 100%; height: 100%; }
.strip { position: relative; height: 42px; display: flex; align-items: stretch; padding-left: 10px; }
.pin, .tab { border-bottom: 1px solid #47474a; background: rgba(32, 32, 34, .55); border-radius: 9px 9px 0 0; position: relative; display: flex; align-items: center; }
.pin { width: 47.700px; justify-content: center; }
.pin::after, .tab:not(.active)::after { content: ""; width: 1px; height: 25px; background: #174469; position: absolute; right: 0; top: 9px; }
.tab { width: 298.500px; padding-left: 15px; }
.tab:nth-of-type(8)::after { display: none; }
.tab.active { background: #060509; border: 1px solid #47474a; border-bottom: 0; padding-left: 14px; }
.favicon { margin-right: 10px; }
.tab-label { width: 222px; font-size: 14px; color: #1b8ff5; overflow: hidden; margin-right: 6px; line-height: 24px; }
.tab-label.fade { -webkit-mask-image: linear-gradient(90deg, #000 86%, transparent 100%); mask-image: linear-gradient(90deg, #000 86%, transparent 100%); }
.plus { margin: 13px 0 0 20px; }
.strip::after { content: ""; position: absolute; left: 1443px; right: 0; bottom: 0; height: 1px; background: #47474a; }
.window { display: flex; gap: 1px; margin-left: auto; height: 36px; }
.window span { width: 56.500px; background: #117fd3; display: flex; align-items: center; justify-content: center; }

.toolbar { position: relative; height: 45px; display: flex; align-items: center; padding-left: 19px; }
.nav { margin-right: 22px; }
.nav:nth-of-type(2) { margin-right: 21px; }
.nav:nth-of-type(3) { margin-right: 17px; }
.omnibox { width: 1514px; height: 35px; border-radius: 18px; background: #f1f3f5; display: flex; align-items: center; padding: 0 13px 0 14px; }
.url { font-size: 16px; color: #80868b; white-space: nowrap; margin-left: 12px; }
.url b { font-weight: 400; color: #202124; }
.star { margin-left: auto; }
.exts { display: flex; margin-left: 19px; gap: 20.500px; }
.exts svg:first-child { margin-right: -1px; }
.rule { width: 1px; height: 20px; background: #173a58; margin: 0 15px 0 17px; }
.menu { margin-left: 25px; }
.bookmarks { position: relative; height: 42px; display: flex; align-items: center; gap: 21px; padding: 0 24px 8px 19px; font-size: 14px; color: #fff; }
.bookmarks a { display: flex; align-items: center; }
.more { margin-left: auto; }

.viewport { height: 901px; display: flex; overflow: hidden; background: #fff; font-family: Roboto, sans-serif; flex: none; }
main { width: 1899px; }
.brand { height: 75px; background: #417690; padding: 0 50px; display: flex; align-items: center; justify-content: space-between; }
h1, h2 { margin: 0; font-weight: 300; }
h1 { font-size: 30px; color: #f5dd5d; padding-top: 1px; }
.tools { font-size: 13.750px; font-weight: 300; text-transform: uppercase; color: #ffc; }
.tools strong { font-weight: 700; }
.tools a { color: #fff; border-bottom: 1px solid rgba(255, 255, 255, .3); }
.crumbs { height: 48px; background: #79aec8; padding: 2px 50px 0; display: flex; align-items: center; font-size: 17.500px; color: #c4dce8; }
.crumbs a { color: #fff; }
.content { padding: 24px 50px 0; }
.title { display: flex; justify-content: space-between; height: 59px; }
h2 { font-size: 25px; color: #666; line-height: 38px; }
.history { width: 91px; height: 33px; border-radius: 18px; background: #999; color: #fff; font-size: 13.750px; line-height: 34px; letter-spacing: .4px; font-weight: 500; text-transform: uppercase; text-align: center; }
.row { display: flex; border-bottom: 1px solid #eee; padding-left: 12px; font-size: 16.250px; }
label { width: 213px; color: #333; font-weight: 700; }
.first { height: 64px; padding-top: 13px; }
.first label { line-height: 40px; }
.field { width: 343px; height: 37px; border: 1px solid #ccc; border-radius: 5px; padding: 0 8px; line-height: 35px; color: #111; }
.second { height: 548px; padding-top: 12px; }
.second label { line-height: 41px; }
.map { position: relative; width: 750px; height: 500px; overflow: hidden; }
.ground, .shape { position: absolute; inset: 0; }
.ctl { position: absolute; background: rgba(255, 255, 255, .4); border-radius: 5px; padding: 4px; display: flex; flex-direction: column; gap: 1px; }
.zoom { left: 8px; top: 8px; }
.info { right: 8px; bottom: 8px; }
.ctl button { width: 25px; height: 26px; border: 0; padding: 0 0 3px; background: #50718e; display: flex; align-items: center; justify-content: center; color: #fff; font: 700 20px/20px Roboto, sans-serif; }
.zoom button:first-child { border-radius: 3px 3px 0 0; }
.zoom button:last-child { border-radius: 0 0 3px 3px; height: 25px; padding-bottom: 1px; }
.info button { border-radius: 3px; height: 25px; padding-bottom: 1px; }
.clear { color: #447e9b; line-height: 24px; }
.submit { margin-top: 38px; height: 90px; background: #f8f8f8; border: 1px solid #eee; border-radius: 5px; padding: 15px 18px; display: flex; gap: 10px; }
.btn { height: 44px; border-radius: 5px; background: #79aec8; color: #fff; padding: 0 18.500px; font-size: 16.250px; line-height: 45px; }
.btn.delete { background: #ba2121; margin-right: auto; font-size: 17.500px; line-height: 42px; }
.btn.primary { background: #417690; }
.scroll { width: 21px; background: #f1f1f1; display: flex; flex-direction: column; align-items: center; }
.scroll i { width: 17px; height: 772px; background: #c1c1c1; }
.down { margin-top: auto; }

.taskbar { height: 50px; background: #080808; display: flex; flex: none; color: #fff; }
.start { width: 60px; display: flex; align-items: center; justify-content: center; }
.search { width: 430px; background: #f2f2f2; border-top: 1px solid #bbb; display: flex; align-items: center; padding: 0 19px 0 11px; font-size: 17.500px; color: #333; }
.search .t { margin: -2px 0 0 11px; }
.mic { margin-left: auto; }
.tasks { display: flex; margin-left: 1px; }
.task { position: relative; width: 62px; display: flex; align-items: center; justify-content: center; }
.task.active { background: linear-gradient(90deg, transparent 1px, #4e4e4e 1px); }
.task.active::after, .task.open::after, .task.multi::after { content: ""; position: absolute; bottom: 0; height: 3px; background: #76b9ed; left: 1px; width: 61px; }
.task.open::after { left: 6px; width: 51px; }
.task.multi::after { left: 5px; width: 51px; background: linear-gradient(90deg, #76b9ed 40px, #4c7698 40px); }
.task svg { width: 30px; height: 30px; }
.task .i-taskview { width: 22px; height: 23px; margin-right: 4px; }
.task .i-edge { width: 25px; height: 26px; margin-right: 2px; }
.task .i-postman { width: 31px; height: 31px; }
.task .i-chrome, .task .i-folder, .task .i-pyfile { width: 28px; height: 28px; }
.task .i-cmd { width: 28px; height: 24px; margin-right: 1px; }
.badge { position: absolute; left: 36px; top: 24px; width: 21px; height: 21px; border: 1px solid #8b8b8b; border-radius: 50%; background: rgba(40, 40, 40, .96); font-size: 15px; line-height: 19px; text-align: center; }
.tray { display: flex; align-items: center; margin-left: auto; }
.tray > svg:nth-of-type(1) { margin-right: 26px; }
.tray > svg:nth-of-type(2) { margin-right: 12px; }
.tray > svg:nth-of-type(3) { margin-right: 12px; }
.tray > svg:nth-of-type(4) { margin-right: 11px; }
.stack { display: flex; flex-direction: column; align-items: center; font-size: 14px; line-height: 22px; padding-bottom: 1px; }
.lang { margin-left: 13px; }
.clock { margin-left: 16px; }
.note { position: relative; margin-left: 23px; }
.note .badge { left: 10px; top: 9px; }
.peek { width: 1px; height: 50px; background: #555; margin: 0 5px 0 26px; }
</style>
